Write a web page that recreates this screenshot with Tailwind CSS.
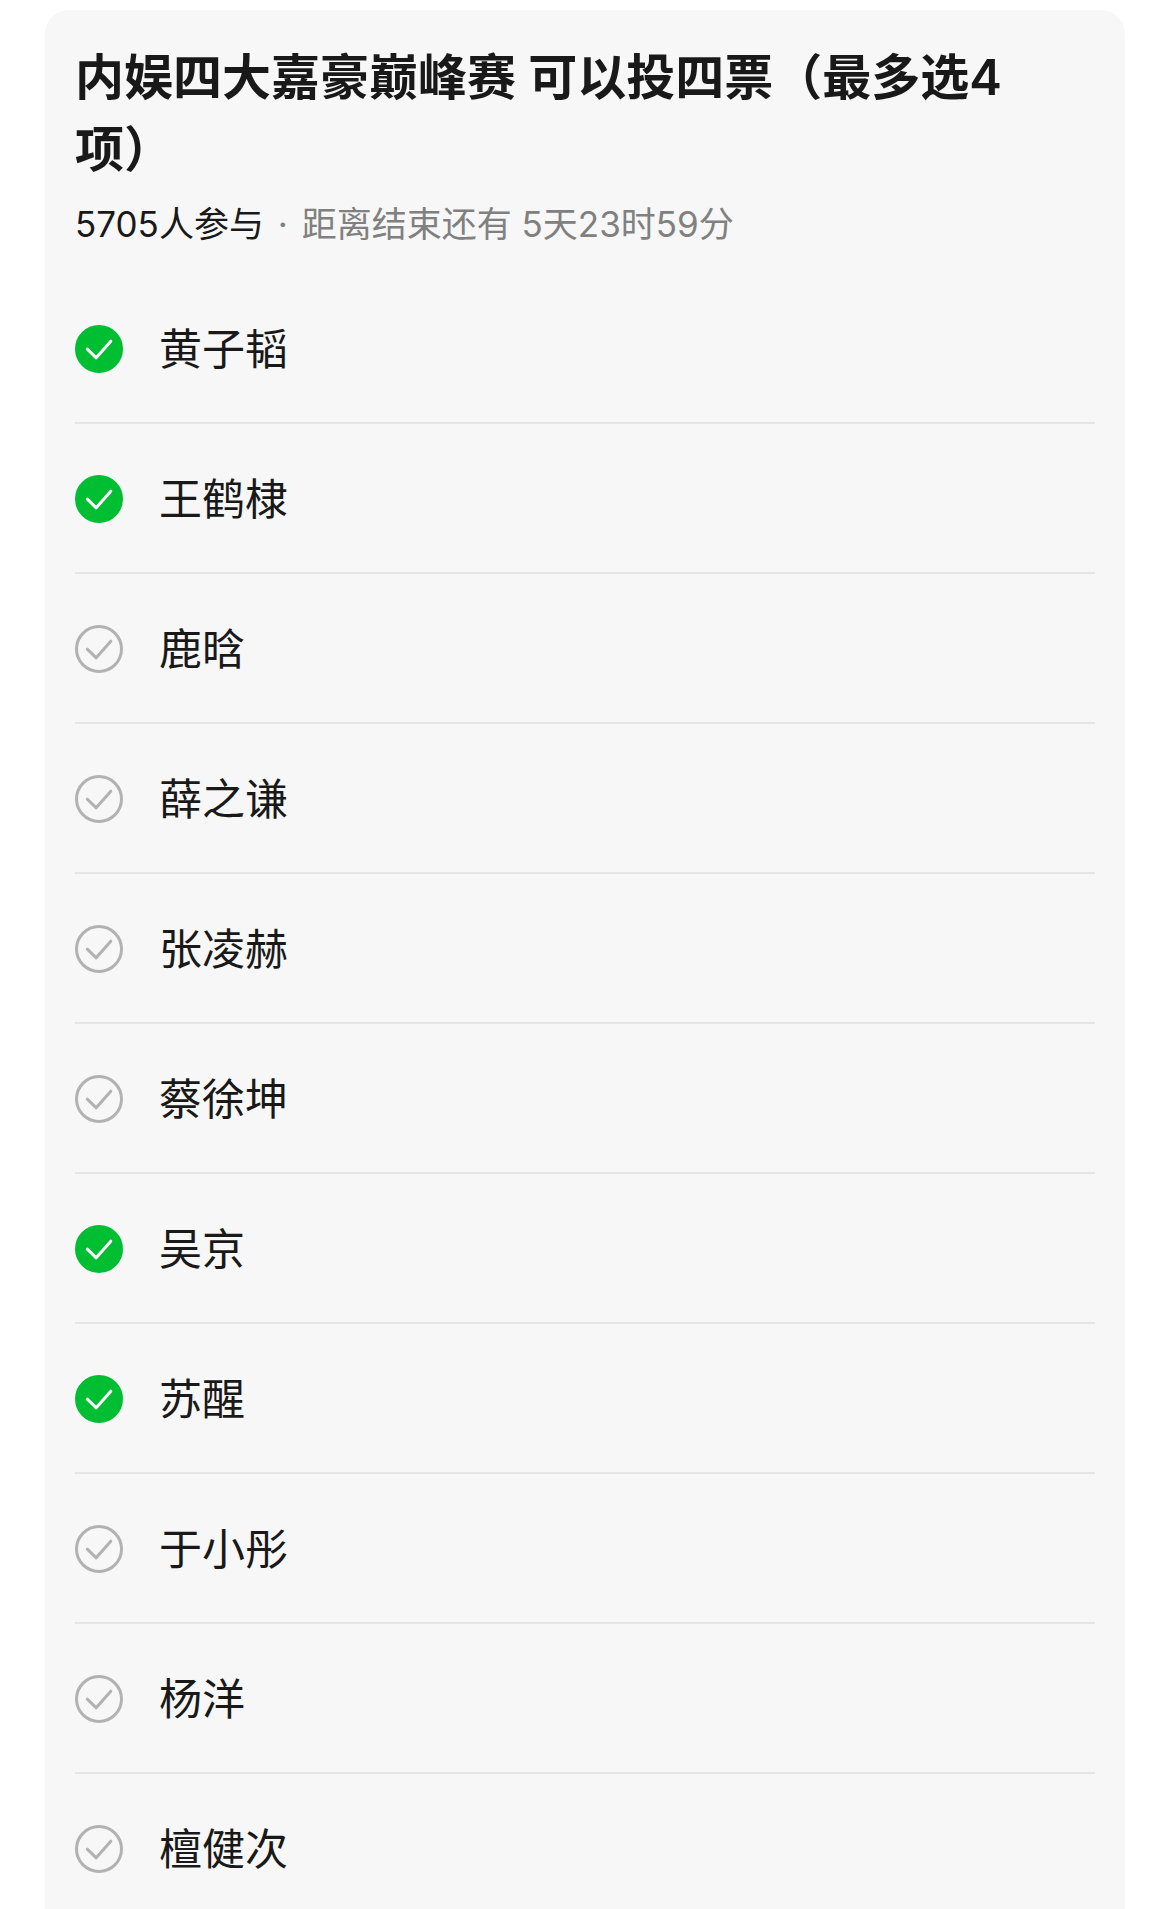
<!DOCTYPE html>
<html lang="zh-CN">

<head>
    <meta charset="UTF-8">
    <meta name="viewport" content="width=device-width, initial-scale=1.0">
    <title>投票</title>
    <script src="https://cdn.jsdelivr.net/npm/@tailwindcss/browser@4"></script>
</head>

<body class="bg-white text-[#191919] font-['Inter','Noto_Sans_CJK_SC',sans-serif]">
    <main class="mx-[45px] mt-[10px] bg-[#f7f7f7] rounded-t-3xl px-[30px] pt-8 pb-9">
        <h1 class="pr-10 text-[49px] leading-[72px] font-semibold">内娱四大嘉豪巅峰赛 可以投四票（最多选4项）</h1>
        <p class="mt-[14px] text-[35px] leading-[48px]">5705人参与<span class="text-[#808080]"><span class="mx-1"> · </span>距离结束还有 5天23时59分</span></p>
        <form class="mt-[26px]">
            <ul id="options"></ul>
        </form>
    </main>

    <script>
        const MAX_VOTES = 4;
        const options = [
            { name: "黄子韬", checked: true },
            { name: "王鹤棣", checked: true },
            { name: "鹿晗", checked: false },
            { name: "薛之谦", checked: false },
            { name: "张凌赫", checked: false },
            { name: "蔡徐坤", checked: false },
            { name: "吴京", checked: true },
            { name: "苏醒", checked: true },
            { name: "于小彤", checked: false },
            { name: "杨洋", checked: false },
            { name: "檀健次", checked: false }
        ];

        const ul = document.getElementById("options");

        options.forEach(function (option, i) {
            const li = document.createElement("li");
            li.className = "border-b-2 border-[#e5e5e5] pt-[51px] pb-[49px] last:border-b-0 last:pb-0";
            li.innerHTML = `
                <label for="option-${i}" class="flex items-center gap-9 text-[43px] leading-[48px] cursor-pointer">
                    <span class="grid shrink-0">
                        <input id="option-${i}" type="checkbox" ${option.checked ? "checked" : ""} class="peer col-start-1 row-start-1 size-12 appearance-none rounded-full border-[3px] border-[#b2b2b2] checked:border-[#00be32] checked:bg-[#00be32]">
                        <svg class="col-start-1 row-start-1 size-12 pointer-events-none text-[#b2b2b2] peer-checked:text-white" viewBox="0 0 48 48" fill="none" stroke="currentColor" stroke-width="3" stroke-linecap="round" stroke-linejoin="round" aria-hidden="true">
                            <path d="M12.3 24.2 L21.2 32.8 L35.8 16.2" />
                        </svg>
                    </span>
                    ${option.name}
                </label>`;
            ul.appendChild(li);
        });

        // ignore a tick that would go over the limit
        ul.addEventListener("change", function (event) {
            if (ul.querySelectorAll("input:checked").length > MAX_VOTES) {
                event.target.checked = false;
            }
        });
    </script>
</body>

</html>
